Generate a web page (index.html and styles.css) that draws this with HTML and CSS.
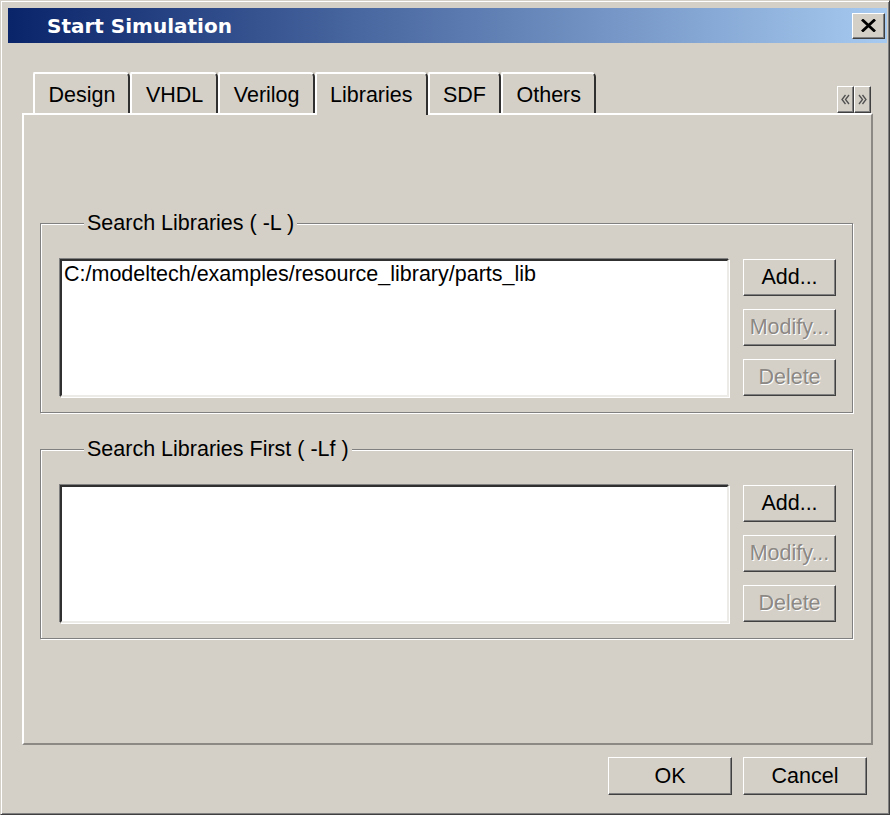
FILE: index.html
```html
<!DOCTYPE html>
<html lang="en">
<head>
    <meta charset="UTF-8">
    <meta name="viewport" content="width=device-width, initial-scale=1.0">
    <title>Start Simulation</title>
<link rel="stylesheet" href="styles.css">
</head>
<body>

    <div class="window">
        <div class="titlebar">
            <span class="title">Start Simulation</span>
            <button class="close-btn" type="button">
                <svg width="15" height="13" viewBox="0 0 15 13">
                    <path d="M1 0.5 L14 12.5 M14 0.5 L1 12.5" stroke="#000" stroke-width="2.8" fill="none"/>
                </svg>
            </button>
        </div>

        <div class="dialog-body">
            <div class="tab-row">
                <div class="tab">Design</div>
                <div class="tab">VHDL</div>
                <div class="tab">Verilog</div>
                <div class="tab active">Libraries</div>
                <div class="tab">SDF</div>
                <div class="tab">Others</div>
                <div class="tab-scroll">
                    <span class="arrow-btn">
                        <svg width="9" height="11" viewBox="0 0 9 11">
                            <path d="M4.5 1 L1 5.5 L4.5 10 M8 1 L4.5 5.5 L8 10" stroke="#505050" stroke-width="1.3" fill="none"/>
                        </svg>
                    </span>
                    <span class="arrow-btn">
                        <svg width="9" height="11" viewBox="0 0 9 11">
                            <path d="M1 1 L4.5 5.5 L1 10 M4.5 1 L8 5.5 L4.5 10" stroke="#505050" stroke-width="1.3" fill="none"/>
                        </svg>
                    </span>
                </div>
            </div>

            <div class="tab-panel">
                <fieldset class="group">
                    <legend>Search Libraries ( -L )</legend>
                    <div class="group-body">
                        <div class="listbox">
                            <div class="list-item">C:/modeltech/examples/resource_library/parts_lib</div>
                        </div>
                        <div class="btn-column">
                            <button class="btn" type="button">Add...</button>
                            <button class="btn" type="button" disabled>Modify...</button>
                            <button class="btn" type="button" disabled>Delete</button>
                        </div>
                    </div>
                </fieldset>

                <fieldset class="group second">
                    <legend>Search Libraries First ( -Lf )</legend>
                    <div class="group-body">
                        <div class="listbox"></div>
                        <div class="btn-column">
                            <button class="btn" type="button">Add...</button>
                            <button class="btn" type="button" disabled>Modify...</button>
                            <button class="btn" type="button" disabled>Delete</button>
                        </div>
                    </div>
                </fieldset>
            </div>

            <div class="footer">
                <button class="btn btn-wide" type="button">OK</button>
                <button class="btn btn-wide" type="button">Cancel</button>
            </div>
        </div>
    </div>

</body>
</html>
```

FILE: styles.css
```css
* {
    box-sizing: border-box;
}

body {
    margin: 0;
    background-color: #d4d0c8;
    font-family: "Liberation Sans", Arial, sans-serif;
    font-size: 21.5px;
    color: #000;
}

.window {
    width: 890px;
    height: 815px;
    display: flex;
    flex-direction: column;
    padding: 7px 2px 2px 7px;
    background: #d4d0c8;
    border: 1px solid;
    border-color: #d4d0c8 #404040 #404040 #d4d0c8;
    box-shadow: inset 1px 1px 0 #fff, inset -1px -1px 0 #808080;
}

/* title bar */
.titlebar {
    height: 35px;
    display: flex;
    align-items: center;
    padding: 0 2px 0 39px;
    background: linear-gradient(to right, #0a246a, #a6caf0);
}

.titlebar .title {
    flex: 1;
    color: #fff;
    font-family: "DejaVu Sans", Verdana, sans-serif;
    font-weight: bold;
    font-size: 20px;
}

.close-btn {
    width: 33px;
    height: 26px;
    padding: 0;
    display: flex;
    align-items: center;
    justify-content: center;
    background: #d4d0c8;
    border: 1px solid;
    border-color: #fff #404040 #404040 #fff;
    box-shadow: inset -1px -1px 0 #808080;
}

.dialog-body {
    flex: 1;
    display: flex;
    flex-direction: column;
    padding: 29px 14px 0 14px;
}

/* tabs */
.tab-row {
    display: flex;
    align-items: flex-end;
    padding-left: 11px;
}

.tab {
    line-height: 24px;
    padding: 9px 13px 6px 13.5px;
    background: #d4d0c8;
    border-top: 2px solid #fff;
    border-left: 2px solid #fff;
    border-right: 2px solid #303030;
    border-top-left-radius: 2px;
    border-top-right-radius: 5px;
}

.tab.active {
    position: relative;
    z-index: 1;
    padding-bottom: 8px;
    margin-bottom: -2px;
}

.tab-scroll {
    display: flex;
    margin-left: auto;
    margin-right: 2px;
}

.arrow-btn {
    width: 17px;
    height: 27px;
    display: flex;
    align-items: center;
    justify-content: center;
    background: #d4d0c8;
    border: 1px solid;
    border-color: #fff #404040 #404040 #fff;
    box-shadow: inset -1px -1px 0 #808080;
}

.tab-panel {
    flex: 1;
    padding: 0 18px 0 16px;
    border: 2px solid;
    border-color: #fff #8c8884 #8c8884 #fff;
}

/* group boxes */
.group {
    margin: 96px 0 0;
    padding: 0 16px 15px 19px;
    border: 1px solid #808080;
    box-shadow: inset 1px 1px 0 #fff, 1px 1px 0 #fff;
}

.group.second {
    margin-top: 24px;
}

.group legend {
    margin-left: 24px;
    padding: 0 3px;
    line-height: 24px;
    background: #d4d0c8;
}

.group-body {
    display: flex;
    gap: 14px;
    margin-top: 24px;
}

.listbox {
    flex: 1;
    height: 138px;
    background: #fff;
    border: 2px solid;
    border-color: #303030 #ecebe8 #ecebe8 #303030;
    box-shadow: -1px -1px 0 #808080, 1px 1px 0 #fff;
}

.list-item {
    padding: 1px 2px;
    line-height: 24px;
    white-space: nowrap;
}

.btn-column {
    width: 93px;
    display: flex;
    flex-direction: column;
    gap: 13px;
}

.btn {
    height: 37px;
    padding: 0;
    font-family: inherit;
    font-size: 21.5px;
    color: #000;
    background: #d4d0c8;
    border: 1px solid;
    border-color: #fff #404040 #404040 #fff;
    box-shadow: inset -1px -1px 0 #808080;
}

.btn:disabled {
    color: #8c8884;
    text-shadow: 1px 1px 0 #fff;
}

/* bottom buttons */
.footer {
    display: flex;
    justify-content: flex-end;
    gap: 11px;
    padding: 12px 6px 17px 0;
}

.btn-wide {
    width: 124px;
    height: 38px;
}
```
